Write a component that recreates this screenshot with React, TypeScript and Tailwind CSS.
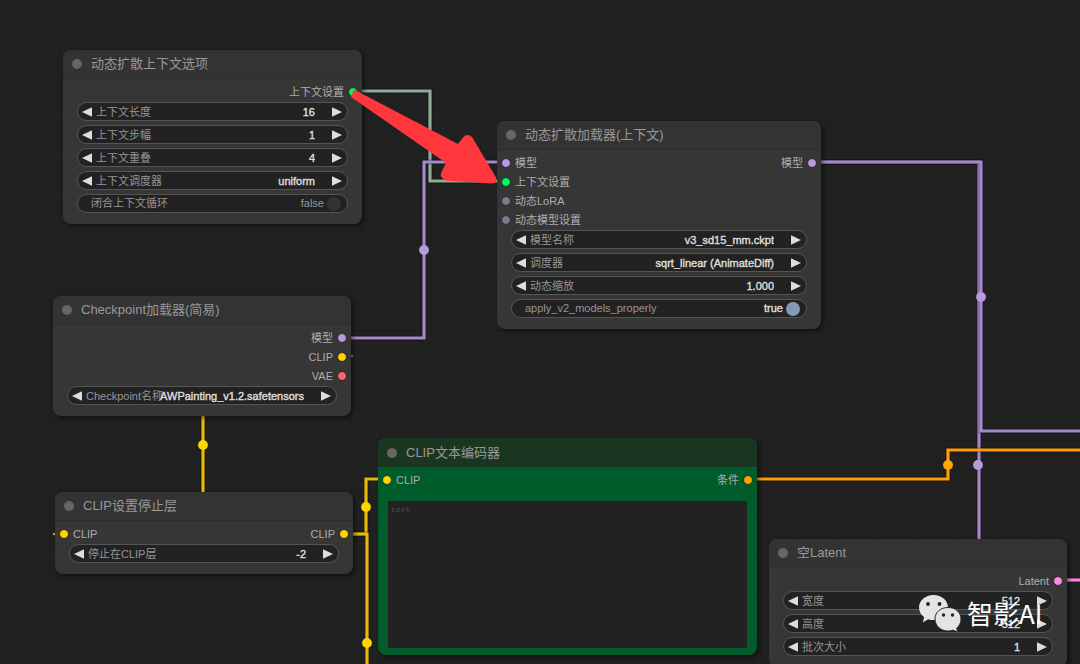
import { useId, type ReactNode } from "react";

type Slot = { name: string; color: string };
type Row = { input?: Slot; output?: Slot };

const PURPLE = "#b99ae0";
const YELLOW = "#ffd500";
const GREEN = "#00f75a";
const GRAY = "#7b7b8f";

function Port({ color }: { color: string }) {
  return (
    <svg viewBox="0 0 10 10" className="size-[10px] shrink-0" aria-hidden="true">
      <circle cx="5" cy="5" r="4.3" fill={color} stroke="#1c1c1c" strokeWidth="0.6" />
    </svg>
  );
}

function Slots({ rows }: { rows: Row[] }) {
  return (
    <div className="flex flex-col px-1 text-[11px] leading-[19px] text-[#adadad]">
      {rows.map((row, i) => (
        <div key={i} className="flex h-[19px] items-center justify-between">
          <span className="flex items-center gap-1">
            {row.input && (
              <>
                <Port color={row.input.color} />
                <span className="pt-px">{row.input.name}</span>
              </>
            )}
          </span>
          <span className="flex items-center gap-1">
            {row.output && (
              <>
                <span className="pt-px">{row.output.name}</span>
                <Port color={row.output.color} />
              </>
            )}
          </span>
        </div>
      ))}
    </div>
  );
}

function Triangle({ left }: { left?: boolean }) {
  return (
    <svg viewBox="0 0 10 10" className="size-[10px]" aria-hidden="true">
      <path d={left ? "M10 0.300V9.700L0 5Z" : "M0 0.300V9.700L10 5Z"} fill="#dddddd" />
    </svg>
  );
}

const pill =
  "flex h-[19px] items-center rounded-full border border-[#555555] bg-[#222222] text-[11px] leading-[17px]";

function Field({ label, value }: { label: string; value: string }) {
  const id = useId();
  return (
    <div className={`${pill} relative px-1`}>
      <button type="button" aria-label={`${label} -`} className="shrink-0">
        <Triangle left />
      </button>
      <label htmlFor={id} className="ml-1 shrink-0 pt-px text-[#969696]">
        {label}
      </label>
      <input
        id={id}
        defaultValue={value}
        className="absolute inset-y-0 right-8 w-44 bg-transparent pt-px text-right text-[#dddddd] outline-none [-webkit-text-stroke:0.4px_#dddddd]"
      />
      <button type="button" aria-label={`${label} +`} className="ml-auto mr-px shrink-0">
        <Triangle />
      </button>
    </div>
  );
}

function Toggle({ label, on }: { label: string; on?: boolean }) {
  return (
    <label className={`${pill} justify-between pl-[13px] pr-[6px] text-[#969696]`}>
      <span>{label}</span>
      <span className="flex items-center gap-[3px]">
        <span className={on ? "text-[#dddddd] [-webkit-text-stroke:0.4px_#dddddd]" : "text-[#969696]"}>
          {on ? "true" : "false"}
        </span>
        <input
          type="checkbox"
          defaultChecked={on}
          className="size-[14px] appearance-none rounded-full bg-[#333333] checked:bg-[#829bb3]"
        />
      </span>
    </label>
  );
}

function Node({
  title,
  place,
  green,
  rows,
  children,
}: {
  title: string;
  place: string;
  green?: boolean;
  rows: Row[];
  children: ReactNode;
}) {
  return (
    <section
      className={`absolute ${place} rounded-lg shadow-[2px_2px_4px_rgba(0,0,0,0.5)] ${green ? "bg-[#005c2b]" : "bg-[#363636]"}`}
    >
      <h2
        className={`flex h-[29px] items-center gap-[9px] rounded-t-lg pl-[9px] text-[13px] text-[#999999] ${
          green ? "bg-[#1b3620]" : "border-b border-[#2e2e2e] bg-[#333333]"
        }`}
      >
        <span className="size-[10px] rounded-full bg-[#666666]" />
        {title}
      </h2>
      <div className="pt-[3px]">
        <Slots rows={rows} />
        {children}
      </div>
    </section>
  );
}

function Widgets({ children }: { children: ReactNode }) {
  return <div className="flex flex-col gap-1 px-[14px] pb-[11px] pt-px">{children}</div>;
}

const wires = [
  { color: "#91ab98", d: "M352 91H430V181H506" },
  { color: "#a587cb", d: "M342 338H424V162H506" },
  { color: "#a587cb", d: "M812 162H979V560" },
  { color: "#a587cb", d: "M812 162H981V431H1080" },
  { color: "#e8b90a", d: "M203 400V500" },
  { color: "#e8b90a", d: "M344 534H366V479H388" },
  { color: "#e8b90a", d: "M344 534H367V664" },
  { color: "#ff9c0a", d: "M747 479H948V450H1080" },
  { color: "#ff82e0", d: "M1058 580H1080" },
];

const knots = [
  { x: 424, y: 250, color: PURPLE },
  { x: 981, y: 297, color: PURPLE },
  { x: 978, y: 465, color: PURPLE },
  { x: 203, y: 445, color: YELLOW },
  { x: 366, y: 507, color: YELLOW },
  { x: 367, y: 643, color: YELLOW },
  { x: 948, y: 465, color: "#ffa500" },
];

export default function App() {
  return (
    <main
      className="relative min-h-screen overflow-hidden bg-[#212121] bg-[linear-gradient(#1e1e1e_1px,transparent_1px),linear-gradient(90deg,#1e1e1e_1px,transparent_1px)] bg-[size:10px_10px]"
      style={{ fontFamily: '"Liberation Sans", "Noto Sans CJK SC", sans-serif' }}
    >
      <svg className="absolute inset-0 size-full overflow-visible" aria-hidden="true">
        {wires.map((w) => (
          <g key={w.d} fill="none">
            <path d={w.d} stroke="#000000" strokeOpacity="0.35" strokeWidth="5" />
            <path d={w.d} stroke={w.color} strokeWidth="3.200" />
          </g>
        ))}
        {knots.map((k) => (
          <circle key={`${k.x}-${k.y}`} cx={k.x} cy={k.y} r="4.900" fill={k.color} />
        ))}
        <circle cx="352" cy="356" r="1.200" fill="#b48a10" />
        <circle cx="54" cy="534" r="1.200" fill="#d9ae08" />
      </svg>

      <Node
        title="动态扩散上下文选项"
        place="left-[63px] top-[50px] w-[299px]"
        rows={[{ output: { name: "上下文设置", color: GREEN } }]}
      >
        <Widgets>
          <Field label="上下文长度" value="16" />
          <Field label="上下文步幅" value="1" />
          <Field label="上下文重叠" value="4" />
          <Field label="上下文调度器" value="uniform" />
          <Toggle label="闭合上下文循环" />
        </Widgets>
      </Node>

      <Node
        title="动态扩散加载器(上下文)"
        place="left-[497px] top-[121px] w-[324px]"
        rows={[
          { input: { name: "模型", color: PURPLE }, output: { name: "模型", color: PURPLE } },
          { input: { name: "上下文设置", color: GREEN } },
          { input: { name: "动态LoRA", color: GRAY } },
          { input: { name: "动态模型设置", color: GRAY } },
        ]}
      >
        <Widgets>
          <Field label="模型名称" value="v3_sd15_mm.ckpt" />
          <Field label="调度器" value="sqrt_linear (AnimateDiff)" />
          <Field label="动态缩放" value="1.000" />
          <Toggle label="apply_v2_models_properly" on />
        </Widgets>
      </Node>

      <Node
        title="Checkpoint加载器(简易)"
        place="left-[53px] top-[296px] w-[298px]"
        rows={[
          { output: { name: "模型", color: PURPLE } },
          { output: { name: "CLIP", color: YELLOW } },
          { output: { name: "VAE", color: "#ff6270" } },
        ]}
      >
        <Widgets>
          <Field label="Checkpoint名称" value="AWPainting_v1.2.safetensors" />
        </Widgets>
      </Node>

      <Node
        title="CLIP设置停止层"
        place="left-[55px] top-[492px] w-[298px]"
        rows={[{ input: { name: "CLIP", color: YELLOW }, output: { name: "CLIP", color: YELLOW } }]}
      >
        <Widgets>
          <Field label="停止在CLIP层" value="-2" />
        </Widgets>
      </Node>

      <Node
        title="CLIP文本编码器"
        place="left-[378px] top-[438px] w-[379px]"
        green
        rows={[{ input: { name: "CLIP", color: YELLOW }, output: { name: "条件", color: "#ffa500" } }]}
      >
        <div className="px-[10px] pb-[7px] pt-3">
          <textarea
            aria-label="text"
            placeholder="text"
            className="block h-[147px] w-full resize-none bg-[#222222] p-[3px] font-['Liberation_Mono'] text-[8px] text-[#dddddd] outline-none placeholder:text-[#505050]"
          />
        </div>
      </Node>

      <Node
        title="空Latent"
        place="left-[769px] top-[539px] w-[298px]"
        rows={[{ output: { name: "Latent", color: "#ff8ae6" } }]}
      >
        <Widgets>
          <Field label="宽度" value="512" />
          <Field label="高度" value="512" />
          <Field label="批次大小" value="1" />
        </Widgets>
      </Node>

      <svg className="pointer-events-none absolute inset-0 size-full" aria-hidden="true">
        <path
          d="M354 89.500L458 144L463 137.500Q467 133 472 137L496 177.500Q498 183.500 491 183.500L446 180.500Q439 178 441 173L446 163L351 97Z"
          fill="#ff363b"
        />
      </svg>

      <div className="pointer-events-none absolute left-[918px] top-[594px] flex items-center gap-[5px]">
        <svg viewBox="0 0 44 38" className="h-[38px] w-[44px]" aria-hidden="true">
          <path
            d="M15.500 1C7.200 1 1 6.700 1 13.600C1 17.500 3 20.900 6.200 23.200L4.800 28.500L10.200 25.300C12 25.900 13.700 26.100 15.500 26.100C24 26.100 30 20.500 30 13.600C30 6.700 24 1 15.500 1Z"
            fill="#e4e4e4"
          />
          <path
            d="M30 13.500C22.500 13.500 17 18.300 17 25C17 31.500 22.500 37 30 37C31.800 37 33.500 36.700 35 36.100L39.800 38L38.600 34.200C41.500 32 43 28.700 43 25C43 18.300 37.500 13.500 30 13.500Z"
            fill="#e4e4e4"
            stroke="#2b2b2b"
            strokeWidth="1"
          />
          <circle cx="10" cy="10" r="1.900" fill="#222222" />
          <circle cx="21.500" cy="10" r="1.900" fill="#222222" />
          <circle cx="25.500" cy="21" r="1.700" fill="#222222" />
          <circle cx="34.500" cy="21" r="1.700" fill="#222222" />
        </svg>
        <span className="font-['Noto_Sans_CJK_SC'] text-[26px] leading-[38px] text-white">智影AI</span>
      </div>
    </main>
  );
}
